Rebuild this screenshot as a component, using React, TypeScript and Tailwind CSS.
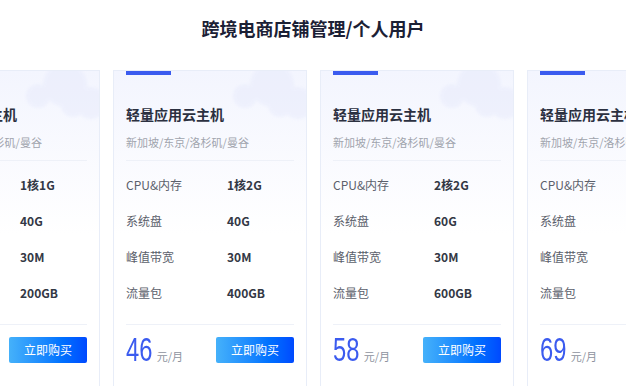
import React from "react";

interface Plan {
  cpu: string;
  disk: string;
  bandwidth: string;
  traffic: string;
  price: string;
}

const plans: Plan[] = [
  { cpu: "1核1G", disk: "40G", bandwidth: "30M", traffic: "200GB", price: "36" },
  { cpu: "1核2G", disk: "40G", bandwidth: "30M", traffic: "400GB", price: "46" },
  { cpu: "2核2G", disk: "60G", bandwidth: "30M", traffic: "600GB", price: "58" },
  { cpu: "2核4G", disk: "80G", bandwidth: "30M", traffic: "800GB", price: "69" },
];

function Clouds() {
  return (
    <svg
      className="pointer-events-none absolute right-0 top-0"
      width="90"
      height="60"
      viewBox="0 0 90 60"
    >
      <defs>
        <filter id="cloudblur" x="-20%" y="-20%" width="140%" height="140%">
          <feGaussianBlur stdDeviation="1.5" />
        </filter>
      </defs>
      <g filter="url(#cloudblur)" fill="#e9ecfc" opacity="0.6">
        <circle cx="56" cy="14" r="22" />
        <circle cx="29" cy="25" r="12" />
        <circle cx="82" cy="32" r="16" />
        <circle cx="64" cy="34" r="12" />
      </g>
    </svg>
  );
}

function Row({ label, value }: { label: string; value: string }) {
  return (
    <div className="flex h-9 items-center">
      <span className="w-[101px] text-[12px] leading-4 text-[#5b606b]">{label}</span>
      <span className="text-[12px] font-bold leading-4 text-[#333845]">{value}</span>
    </div>
  );
}

function PlanCard({ plan }: { plan: Plan }) {
  return (
    <div className="relative h-[330px] w-[194px] shrink-0 border border-[#e8edf8] bg-gradient-to-b from-[#f3f5fe] via-white to-white">
      <Clouds />
      <div className="relative px-3">
        <div className="h-1 w-[45px] bg-[#3a5bef]" />
        <h3 className="mt-[29px] text-[14px] font-bold leading-5 text-[#2b3040]">轻量应用云主机</h3>
        <p className="mt-[10px] text-[11px] leading-4 text-[#a0a4ad]">新加坡/东京/洛杉矶/曼谷</p>
        <div className="mt-[10px] h-px bg-[#eef1f8]" />
        <div className="mt-[6px]">
          <Row label="CPU&内存" value={plan.cpu} />
          <Row label="系统盘" value={plan.disk} />
          <Row label="峰值带宽" value={plan.bandwidth} />
          <Row label="流量包" value={plan.traffic} />
        </div>
        <div className="mt-[13px] h-px bg-[#eef1f8]" />
        <div className="mt-3 flex h-[26px] items-center justify-between">
          <div className="flex items-baseline">
            <span className="mr-[-6px] inline-block origin-left scale-x-[0.72] text-[33px] leading-8 text-[#3b5bef] [font-family:'Liberation_Sans',sans-serif]">
              {plan.price}
            </span>
            <span className="text-[11px] leading-4 text-[#8e939e]">元/月</span>
          </div>
          <button
            type="button"
            className="h-[26px] w-[78px] rounded-[2px] bg-gradient-to-r from-[#45b1fa] to-[#0049ff] text-[12px] leading-4 text-white"
          >
            立即购买
          </button>
        </div>
      </div>
    </div>
  );
}

export default function App() {
  return (
    <div className="h-[386px] w-[626px] overflow-hidden bg-white [font-family:'Noto_Sans_CJK_SC','Noto_Sans',sans-serif]">
      <h2 className="pt-[14px] text-center text-[18px] font-bold leading-7 text-[#1b2035]">
        跨境电商店铺管理/个人用户
      </h2>
      <div className="ml-[-94px] mt-[28px] flex gap-[13px]">
        {plans.map((p, i) => (
          <PlanCard key={i} plan={p} />
        ))}
      </div>
    </div>
  );
}
